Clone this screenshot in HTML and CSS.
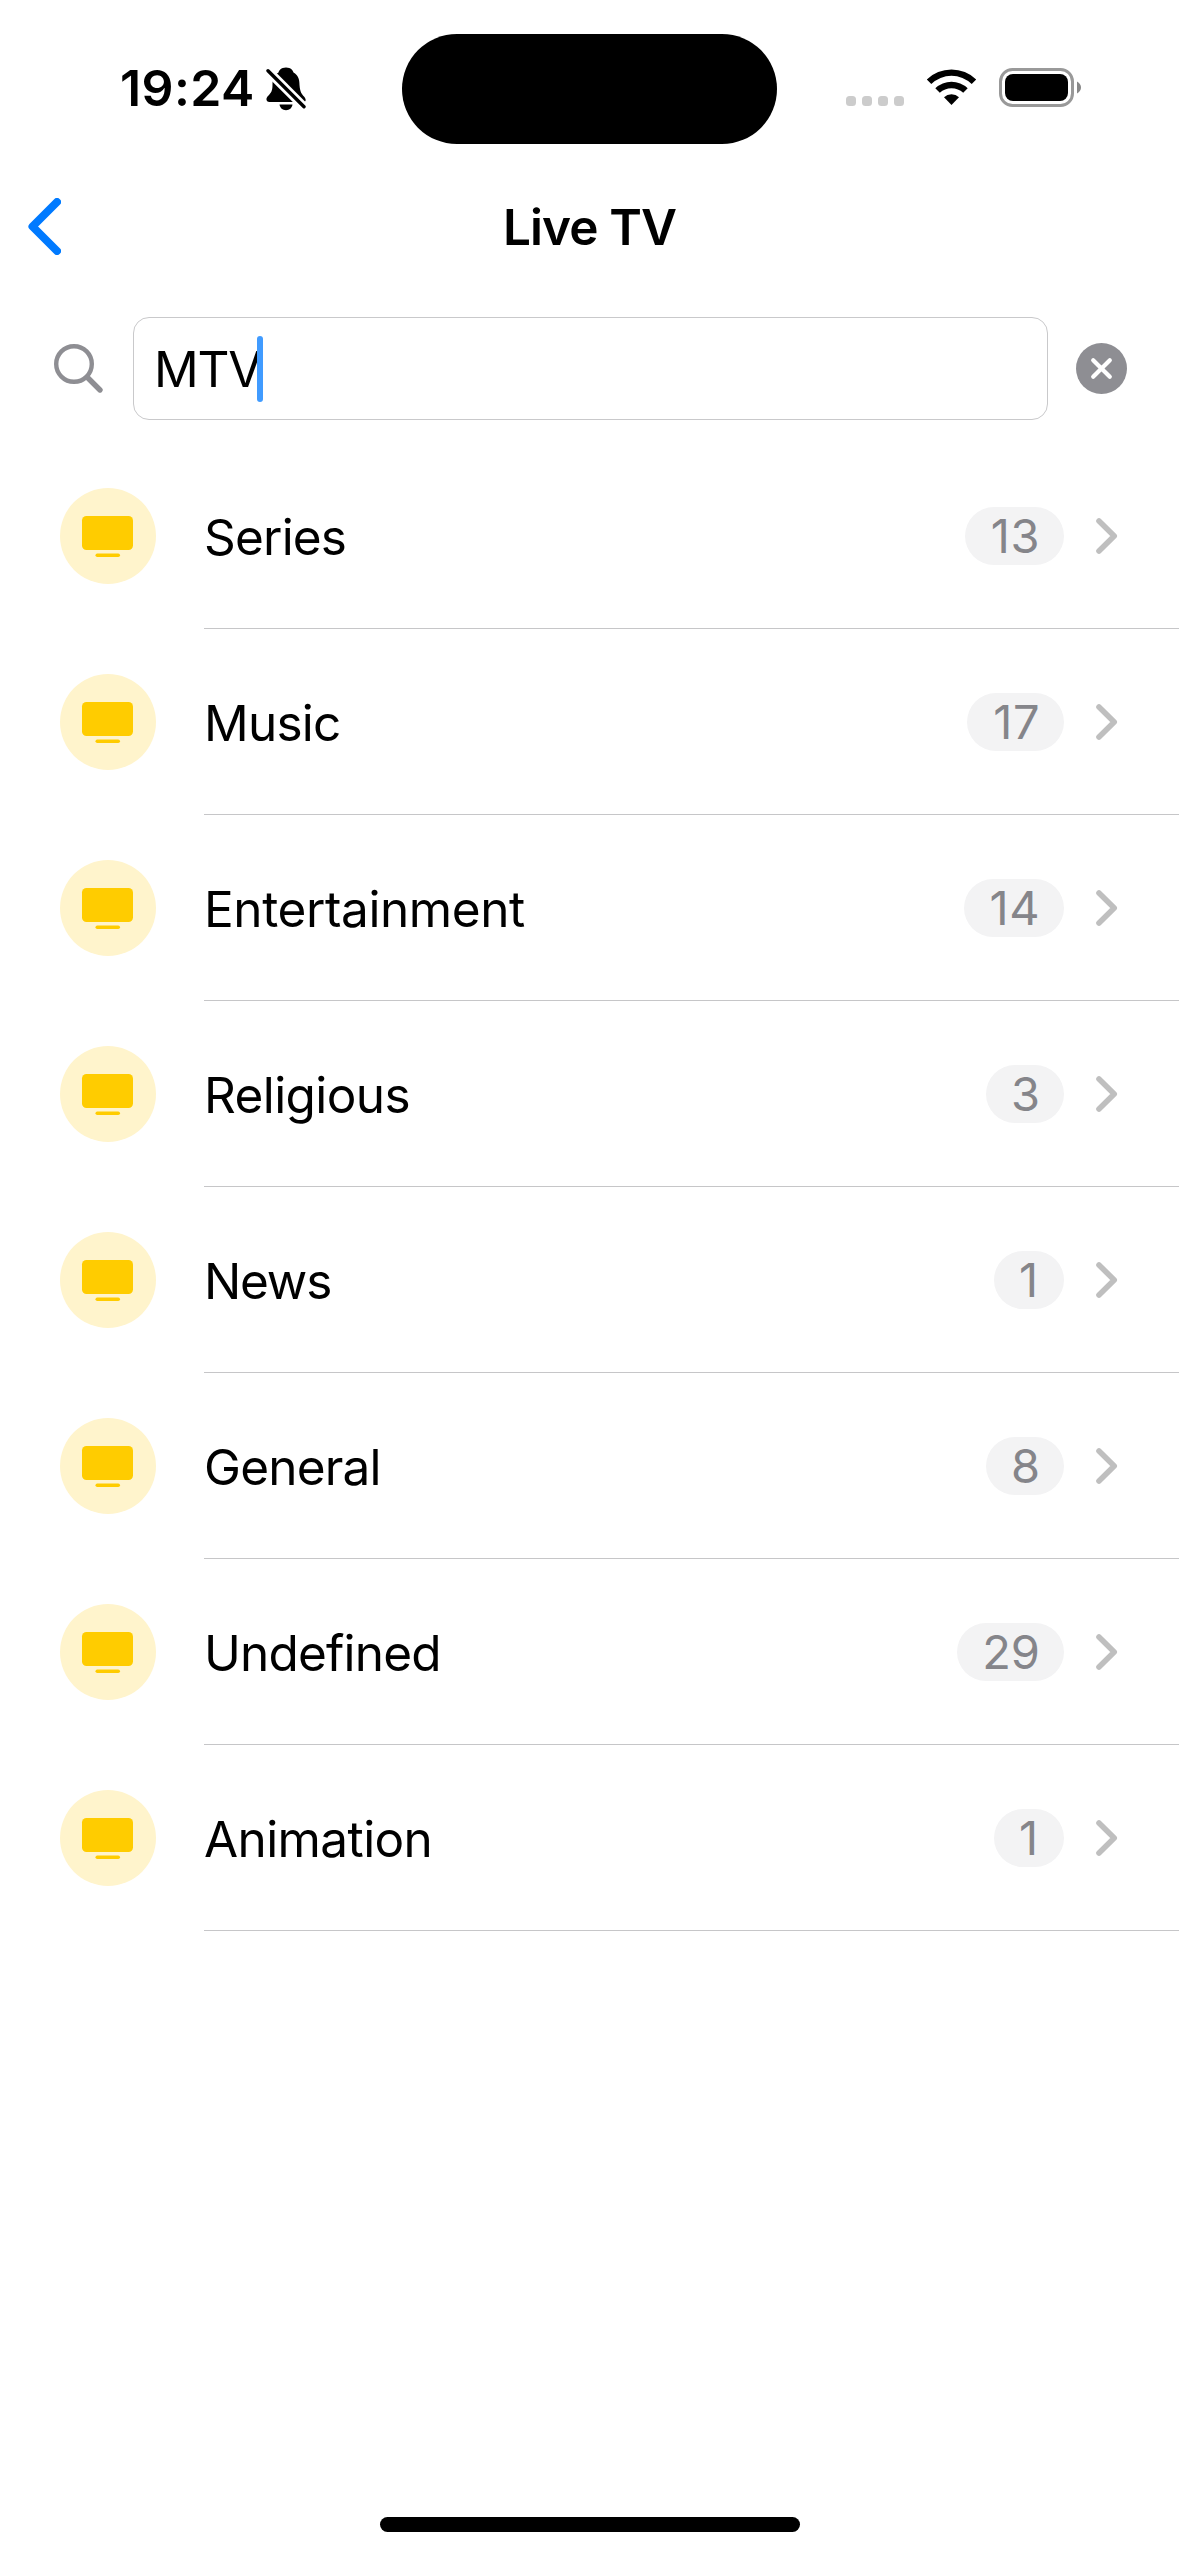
FILE: index.html
```html
<!DOCTYPE html>
<html lang="en">
<head>
<meta charset="utf-8">
<title>Live TV</title>
<link rel="stylesheet" href="styles.css">
</head>
<body>
<svg class="sprite" aria-hidden="true">
  <symbol id="tv" viewBox="0 0 96 96">
    <rect x="22" y="28" width="51" height="34" rx="4.5"/>
    <rect x="35.5" y="65.500" width="24.500" height="3.500" rx="1.750"/>
  </symbol>
  <symbol id="chevron" viewBox="0 0 22 36">
    <path d="M3 3L18.200 18L3 33" fill="none" stroke="#bfbfbf" stroke-width="5.600" stroke-linecap="round" stroke-linejoin="round"/>
  </symbol>
</svg>
<div class="screen">
  <div class="status">
    <div class="status-left">
      <span class="time">19:24</span>
      <svg class="bell" viewBox="0 0 40 44">
        <path d="M20 .5C25 .5 27 3.500 27.500 5.500C32 8 33.500 12 33.500 18C34 25 36 27.500 38 29.500C41 33 39.500 35 37 35H3.500C0 35 -.5 31.500 2 29C5 26 6.500 24 6.500 18C6.500 12 8 8 12.500 5.500C13 3.500 15 .5 20 .5Z"/>
        <path d="M13.500 37.500H26.500C26 41 23.500 43.200 20 43.200S14 41 13.500 37.500Z"/>
        <path d="M-2 -.2L42 43.800" stroke="#fff" stroke-width="9"/>
        <path d="M2 3.800L38 39.800" stroke="#000" stroke-width="3.400" stroke-linecap="round"/>
      </svg>
    </div>
    <div class="island"></div>
    <div class="status-right">
      <div class="dots"><i></i><i></i><i></i><i></i></div>
      <svg class="wifi" viewBox="0 0 51 38">
        <path d="M.8 11.500A35.500 35.500 0 0 1 50.200 11.500L45.700 16A29 29 0 0 0 5.300 16Z"/>
        <path d="M9.300 20.300A23.500 23.500 0 0 1 41.700 20.300L37.200 24.800A17 17 0 0 0 13.800 24.800Z"/>
        <path d="M18 29.200A11 11 0 0 1 33 29.200L25.500 37Z"/>
      </svg>
      <svg class="battery" viewBox="0 0 83 39">
        <rect x="1.500" y="1.500" width="72" height="36" rx="12" fill="none" stroke="#999" stroke-width="3"/>
        <rect x="6" y="6" width="63" height="27" rx="8"/>
        <path d="M78 13.500Q82 16 82 19.500T78 25.500Z" fill="#888"/>
      </svg>
    </div>
  </div>
  <div class="nav">
    <svg class="back" viewBox="0 0 33 57"><path d="M29 4L4.500 28.500L29 53" fill="none" stroke="#007aff" stroke-width="8" stroke-linecap="round" stroke-linejoin="round"/></svg>
    <h1 class="title">Live TV</h1>
  </div>
  <div class="search">
    <svg class="glass" viewBox="0 0 50 50"><g fill="none" stroke="#8e8e93" stroke-linecap="round"><circle cx="20" cy="20" r="17.800" stroke-width="4.400"/><path d="M33.500 33.500L46 46" stroke-width="5.400"/></g></svg>
    <div class="field"><span class="query">MTV</span><i class="caret"></i></div>
    <svg class="clear" viewBox="0 0 51 51"><circle cx="25.500" cy="25.500" r="25.500" fill="#8e8e93"/><path d="M17.200 17.200L33.800 33.800M33.800 17.200L17.200 33.800" stroke="#fff" stroke-width="4.200" stroke-linecap="round"/></svg>
  </div>
  <div class="list">
    <div class="row"><svg class="icon"><use href="#tv"/></svg><div class="body"><span class="label">Series</span><span class="badge teen">13</span><svg class="chev"><use href="#chevron"/></svg></div></div>
    <div class="row"><svg class="icon"><use href="#tv"/></svg><div class="body"><span class="label">Music</span><span class="badge teen">17</span><svg class="chev"><use href="#chevron"/></svg></div></div>
    <div class="row"><svg class="icon"><use href="#tv"/></svg><div class="body"><span class="label long">Entertainment</span><span class="badge teen">14</span><svg class="chev"><use href="#chevron"/></svg></div></div>
    <div class="row"><svg class="icon"><use href="#tv"/></svg><div class="body"><span class="label wide">Religious</span><span class="badge">3</span><svg class="chev"><use href="#chevron"/></svg></div></div>
    <div class="row"><svg class="icon"><use href="#tv"/></svg><div class="body"><span class="label tight">News</span><span class="badge one">1</span><svg class="chev"><use href="#chevron"/></svg></div></div>
    <div class="row"><svg class="icon"><use href="#tv"/></svg><div class="body"><span class="label">General</span><span class="badge">8</span><svg class="chev"><use href="#chevron"/></svg></div></div>
    <div class="row"><svg class="icon"><use href="#tv"/></svg><div class="body"><span class="label">Undefined</span><span class="badge">29</span><svg class="chev"><use href="#chevron"/></svg></div></div>
    <div class="row"><svg class="icon"><use href="#tv"/></svg><div class="body"><span class="label wide">Animation</span><span class="badge one">1</span><svg class="chev"><use href="#chevron"/></svg></div></div>
  </div>
  <div class="home"></div>
</div>
</body>
</html>
```
FILE: styles.css
```css
* { box-sizing: border-box; }
body { margin: 0; background: #fff; color: #000; font-family: Inter, "Liberation Sans", sans-serif; }
svg { display: block; flex: none; }
.sprite { width: 0; height: 0; position: absolute; }
.screen { width: 1179px; height: 2556px; display: flex; flex-direction: column; overflow: hidden; }

.status { height: 177px; display: grid; grid-template-columns: 402px 375px 402px; }
.status-left { display: flex; align-items: flex-start; padding: 67px 0 0 120px; }
.time { width: 146px; font-size: 50px; line-height: 42px; font-weight: 600; letter-spacing: 0.4px; white-space: nowrap; }
.bell { width: 40px; height: 44px; }
.island { height: 110px; margin-top: 34px; border-radius: 55px; background: #000; }
.status-right { display: flex; align-items: flex-start; padding: 68px 0 0 69px; }
.dots { display: flex; gap: 6px; margin: 28px 22px 0 0; }
.dots i { width: 10px; height: 10px; border-radius: 3.500px; background: #ccc; }
.wifi { width: 51px; height: 38px; margin-right: 22px; }
.battery { width: 83px; height: 39px; }

.nav { height: 102px; display: grid; grid-template-columns: 61px 1fr 61px; align-items: center; }
.back { width: 33px; height: 57px; margin: -3px 0 0 28px; }
.title { margin: -2px 0 0; text-align: center; font-size: 49.500px; line-height: 60px; font-weight: 600; letter-spacing: -0.900px; }

.search { height: 164px; padding: 38px 52px 23px 54px; display: flex; align-items: center; }
.glass { width: 50px; height: 50px; margin-right: 29px; }
.field { width: 915px; height: 103px; border: 1px solid #c9c9cb; border-radius: 16px; display: flex; align-items: center; padding-left: 20px; }
.query { width: 103px; padding-top: 1px; font-size: 49.500px; line-height: 60px; letter-spacing: -1.200px; white-space: nowrap; }
.caret { width: 6px; height: 66px; border-radius: 3px; background: #409bff; }
.clear { width: 51px; height: 51px; margin-left: 28px; }

.row { height: 186px; display: flex; padding-left: 60px; }
.icon { width: 96px; height: 96px; margin: 45px 48px 0 0; border-radius: 50%; background: #fff4cc; fill: #fc0; }
.body { flex: 1; display: flex; align-items: center; border-bottom: 1px solid #c6c6c8; padding: 1px 61px 0 0; }
.label { flex: 1; padding-top: 2px; font-size: 49.500px; line-height: 60px; letter-spacing: -0.800px; white-space: nowrap; }
.label.long { letter-spacing: -0.400px; }
.label.wide { letter-spacing: -0.600px; }
.label.tight { letter-spacing: -1.200px; }
.badge { height: 58px; border-radius: 29px; padding: 0 24px 0 25px; background: #f3f3f4; color: #85858a; font-size: 47px; line-height: 58px; white-space: nowrap; }
.badge.teen { padding-left: 26px; letter-spacing: 0.500px; }
.badge.one { padding: 0 26px 0 25px; }
.chev { width: 22px; height: 36px; margin-left: 32px; }
.home { width: 420px; height: 15px; margin: auto auto 24px; border-radius: 8px; background: #000; }
```
